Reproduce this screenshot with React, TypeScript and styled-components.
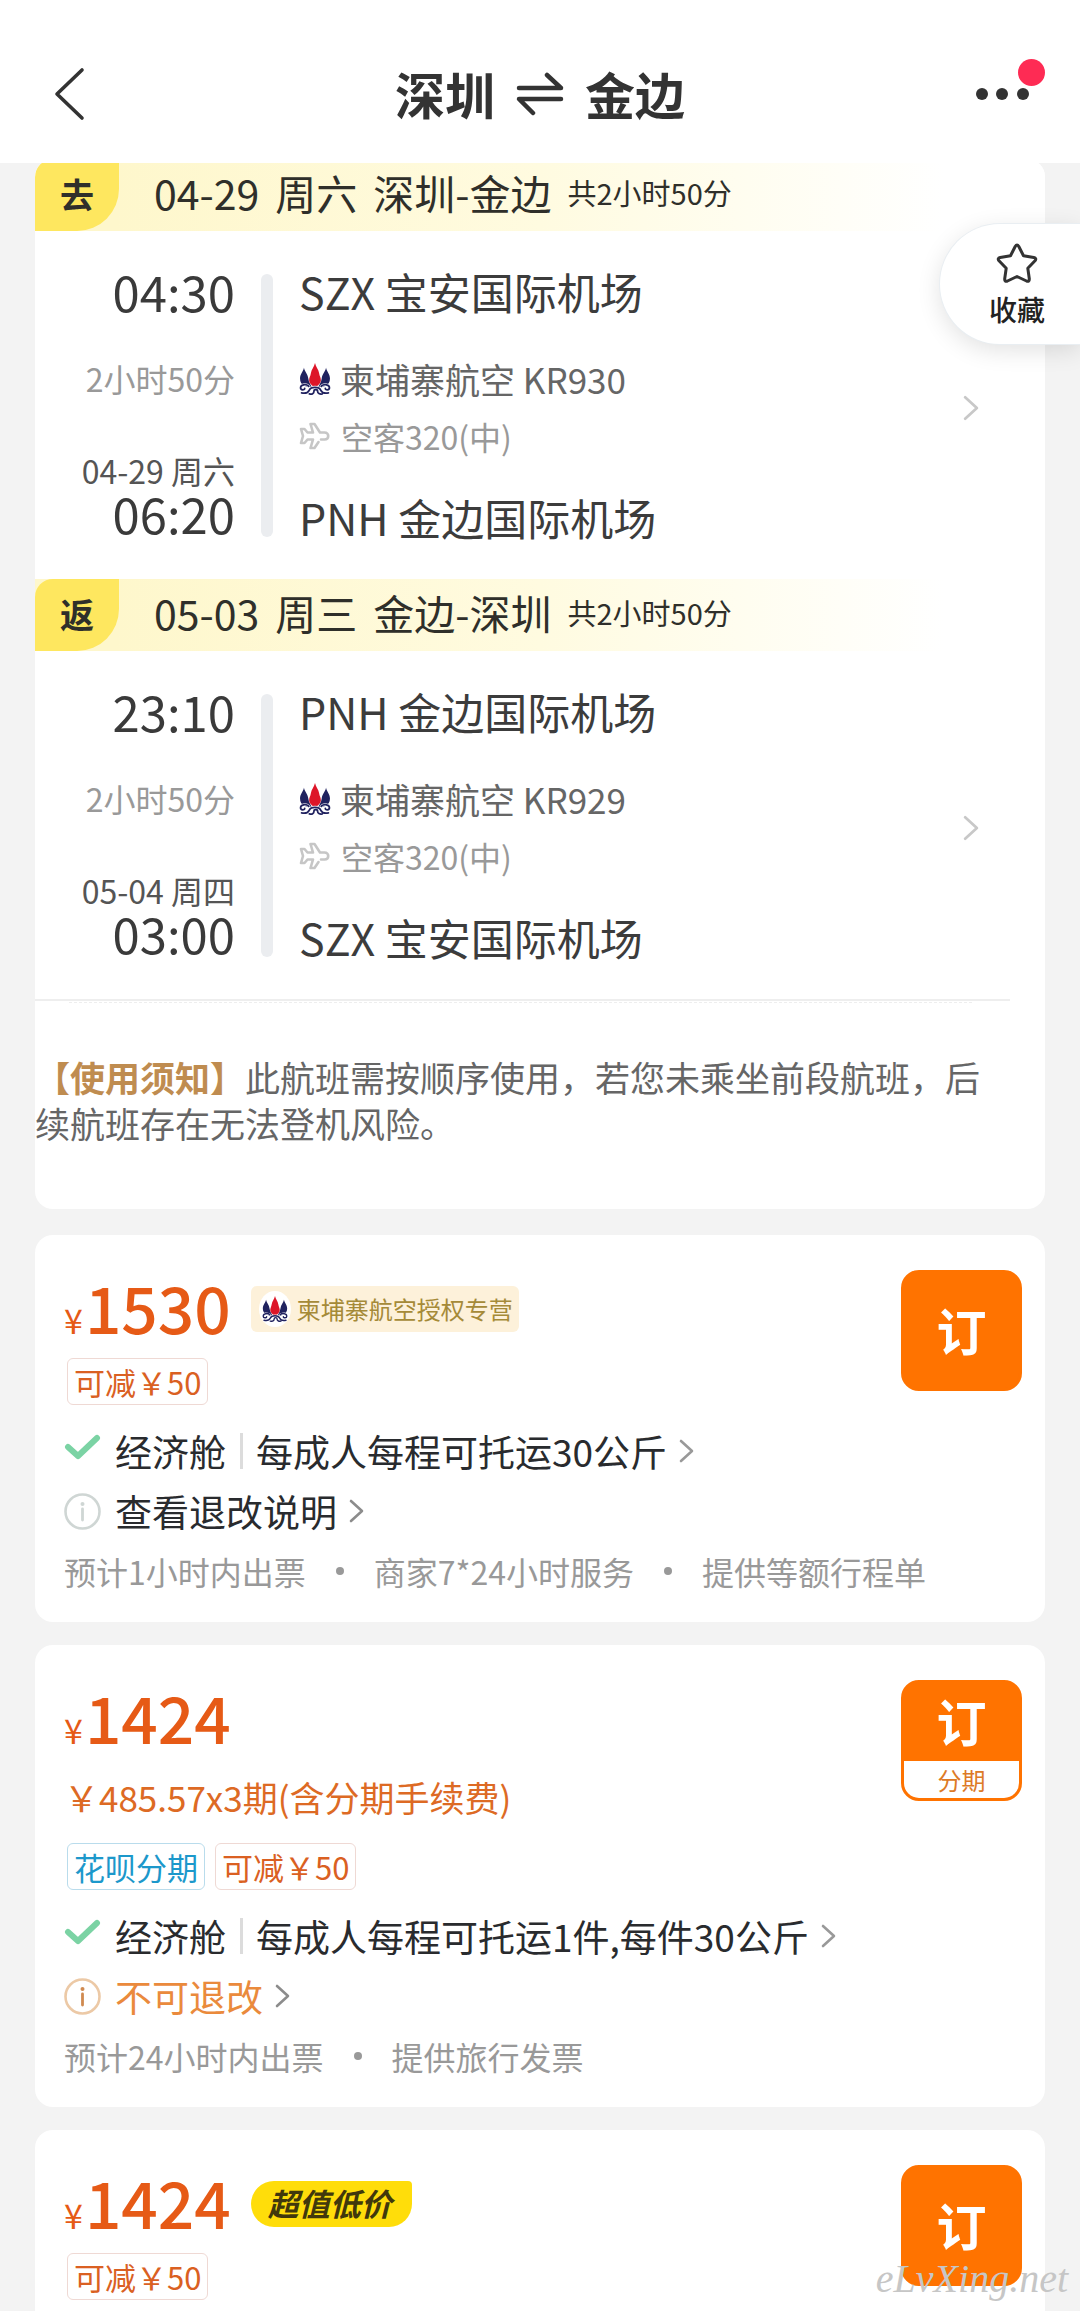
import React from 'react';
import styled, { createGlobalStyle, css } from 'styled-components';

const sans = '"Noto Sans CJK SC", "Noto Sans", sans-serif';

const Global = createGlobalStyle`
  *, *::before, *::after { box-sizing: border-box; }
  body { margin: 0; background: #f3f3f3; font-family: ${sans}; color: #333; }
  h1, p { margin: 0; }
  button { border: 0; padding: 0; background: none; font: inherit; color: inherit; cursor: pointer; }
  svg { display: block; flex: none; }
`;

const Page = styled.div`
  position: relative;
  height: 100vh;
  overflow: hidden;
`;

const Header = styled.header`
  position: relative;
  z-index: 2;
  display: grid;
  grid-template-columns: 1fr auto 1fr;
  align-items: center;
  padding: 56px 32px 32px;
  background: #fff;
`;

const BackButton = styled.button`
  display: flex;
  align-items: center;
  justify-self: start;
  height: 75px;
  padding-left: 16px;
`;

const MoreButton = styled.button`
  position: relative;
  display: flex;
  align-items: center;
  justify-self: end;
  height: 75px;
`;

const UnreadDot = styled.span`
  position: absolute;
  top: 3px;
  right: 3px;
  width: 27px;
  height: 27px;
  border-radius: 50%;
  background: #fe2b54;
`;

const Title = styled.h1`
  display: flex;
  align-items: center;
  gap: 21px;
  font-size: 50px;
  line-height: 75px;
  font-weight: 700;
`;

const Main = styled.main`
  display: flex;
  flex-direction: column;
  gap: 23px;
  padding: 0 35px;
  margin-top: -4px;
`;

const Card = styled.section`
  background: #fff;
  border-radius: 18px;
`;

const ItineraryCard = styled(Card)`
  overflow: hidden;
  margin-bottom: 3px;
`;

const LegBanner = styled.div`
  display: flex;
  align-items: stretch;
  height: 72px;
  background: linear-gradient(90deg, #fef7cc 8%, #fffbe0 50%, #fff 90%);
  color: #2f2f2a;
`;

const LegTag = styled.span`
  width: 84px;
  border-radius: 18px 0 42px 0;
  background: #fee75f;
  font-size: 34px;
  line-height: 70px;
  font-weight: 700;
  text-align: center;
`;

const LegHeading = styled.div`
  display: flex;
  align-items: center;
  gap: 16px;
  padding: 0 0 6px 35px;
  font-size: 41px;
  line-height: 60px;
`;

const LegTotal = styled.span`
  font-size: 29px;
`;

const LegBody = styled.div`
  display: grid;
  grid-template-columns: 200px 12px 1fr auto;
  column-gap: 26px;
  align-items: stretch;
  padding: 40px 66px 42px 0;
  line-height: 40px;
`;

const Times = styled.div`
  display: flex;
  flex-direction: column;
  align-items: flex-end;
`;

const Clock = styled.time`
  font-size: 49px;
  color: #3a3a3a;
`;

const Duration = styled.span`
  margin: 47px 0 52px;
  font-size: 32px;
  color: #999;
`;

const ArrivalDate = styled.span`
  margin-bottom: 3px;
  font-size: 32px;
  color: #555;
`;

const Rail = styled.span`
  margin-top: 3px;
  border-radius: 6px;
  background: #ebedf0;
`;

const Stops = styled.div`
  display: flex;
  flex-direction: column;
`;

const Airport = styled.span`
  font-size: 43px;
  color: #3c3c3c;
`;

const Carrier = styled.span`
  display: flex;
  align-items: center;
  gap: 9px;
  margin: 48px 0 17px;
  font-size: 35px;
  color: #666;
`;

const Aircraft = styled.span`
  display: flex;
  align-items: center;
  gap: 10px;
  margin-bottom: 41px;
  font-size: 32px;
  color: #999;
`;

const LegLink = styled.a`
  display: flex;
  align-items: center;
  padding-top: 8px;
`;

const Notice = styled.div`
  margin-right: 35px;
  padding-bottom: 63px;
  border-top: 2px solid #eee;

  &::before {
    content: '';
    display: block;
    margin: 1px 38px 51px 34px;
    border-top: 1px dashed #eee;
  }
`;

const NoticeText = styled.p`
  font-size: 35px;
  line-height: 46px;
  color: #666;

  strong { color: #bf8c50; }
`;

const OfferCard = styled(Card)`
  display: flex;
  align-items: flex-start;
  justify-content: space-between;
  padding: 35px 23px 29px 29px;
`;

const OfferBody = styled.div`
  display: flex;
  flex-direction: column;
  min-width: 0;
`;

const PriceRow = styled.div`
  display: flex;
  align-items: center;
  gap: 20px;
  height: 78px;
  margin-bottom: 2px;
`;

const Price = styled.span`
  padding-top: 8px;
  font-size: 64px;
  line-height: 78px;
  font-weight: 500;
  color: #e65a16;

  small { margin-right: 2px; font-size: 34px; font-weight: 400; }
`;

const AgentBadge = styled.span`
  display: flex;
  align-items: center;
  gap: 6px;
  height: 46px;
  padding: 0 6px 0 8px;
  border-radius: 6px;
  background: #fdf1da;
  font-size: 24px;
  line-height: 42px;
  color: #a58a38;
`;

const LogoDisc = styled.span`
  display: flex;
  align-items: center;
  justify-content: center;
  width: 32px;
  height: 36px;
  border-radius: 50%;
  background: #fff;
`;

const DealBadge = styled.span`
  height: 46px;
  padding: 0 20px 0 17px;
  border-radius: 23px 4px 23px 23px;
  background: #ffdd0a;
  font-size: 31px;
  line-height: 44px;
  font-weight: 700;
  font-style: italic;
  color: #41380c;
`;

const Installment = styled.p`
  margin: 17px 0 2px;
  font-size: 35px;
  line-height: 40px;
  color: #dd6a24;
`;

const Tags = styled.div<{ $tight?: boolean }>`
  display: flex;
  gap: 10px;
  margin: ${p => (p.$tight ? '8px' : '24px')} 0 0 3px;
`;

const Tag = styled.span<{ $tone: 'blue' | 'orange' }>`
  padding: 0 6px;
  border: 1px solid;
  border-radius: 6px;
  font-size: 31px;
  line-height: 45px;
  ${p =>
    p.$tone === 'blue'
      ? css`color: #1c98cb; border-color: #b9dcec;`
      : css`color: #da6022; border-color: #efd9d4;`}
`;

const Rule = styled.button<{ $warn?: boolean; $first?: boolean }>`
  display: flex;
  align-items: center;
  align-self: flex-start;
  height: 48px;
  margin-top: ${p => (p.$first ? '22px' : '12px')};
  font-size: 37px;
  line-height: 48px;
  white-space: nowrap;
  color: ${p => (p.$warn ? '#ea8a3c' : '#292b2e')};
`;

const RuleIcon = styled.span`
  width: 51px;
`;

const Divider = styled.span`
  width: 3px;
  height: 36px;
  margin: 0 13px 0 14px;
  background: #dcdcdc;
`;

const RuleArrow = styled.span`
  padding-left: 12px;
`;

const Perks = styled.ul`
  display: flex;
  align-items: center;
  gap: 30px;
  margin: 16px 0 2px;
  padding: 0;
  list-style: none;
  font-size: 32px;
  line-height: 40px;
  white-space: nowrap;
  color: #999;

  li { display: flex; align-items: center; gap: 30px; }
  li + li::before {
    content: '';
    width: 8px;
    height: 8px;
    border-radius: 50%;
    background: #999;
  }
`;

const BookButton = styled.button`
  display: flex;
  flex: none;
  flex-direction: column;
  width: 121px;
  height: 121px;
  margin-left: -121px;
  border: 3px solid #ff7300;
  border-radius: 18px;
  overflow: hidden;
  background: #ff7300;
`;

const BookLabel = styled.span`
  display: flex;
  flex: 1;
  align-items: center;
  justify-content: center;
  width: 100%;
  padding-bottom: 4px;
  font-size: 50px;
  line-height: 50px;
  font-weight: 700;
  color: #fff;
`;

const BookNote = styled.span`
  width: 100%;
  background: #fff;
  font-size: 24px;
  line-height: 37px;
  text-align: center;
  color: #dd7a26;
`;

const Favorite = styled.button`
  position: absolute;
  z-index: 3;
  top: 224px;
  right: 0;
  display: flex;
  flex-direction: column;
  align-items: center;
  gap: 3px;
  width: 140px;
  height: 120px;
  padding: 18px 0 0 14px;
  border-radius: 60px 0 0 60px;
  background: #fff;
  box-shadow: 0 0 0 1px #e9eef2, 0 6px 24px rgba(0, 0, 0, 0.12);
  font-size: 28px;
  line-height: 36px;
  font-weight: 500;
  color: #222;
`;

const Watermark = styled.span`
  position: absolute;
  z-index: 3;
  right: 12px;
  bottom: 8px;
  font-family: "Liberation Serif", serif;
  font-size: 40px;
  line-height: 48px;
  font-style: italic;
  color: #c6c6c6;
`;

function Chevron({ width = 15, height = 24, color = '#999' }) {
  return (
    <svg width={width} height={height} viewBox="0 0 15 24" fill="none" stroke={color} strokeWidth="2.6" strokeLinecap="round" strokeLinejoin="round">
      <path d="M2 2l11 10L2 22" />
    </svg>
  );
}

const waves =
  'M9.500 22.500C6.500 19.800 1.500 21 1.500 24c0 2.500 4 2.600 4 .6M10 30c2.500.6 4.500-.5 4.500-2.700 0-2 3.500-2 3.500 0 0 2 2 3.200 4.500 2.700M21.500 22.500c3-2.700 8-1.500 8 1.500 0 2.500-4 2.600-4 .6M2.500 29c4 .8 6.500-.5 7.500-2.800 1.500-3.600 9.500-3.600 11 0 1 2.300 3.500 3.600 7.500 2.800';

function AirlineLogo({ size = 32 }) {
  return (
    <svg width={size} height={size} viewBox="0 0 31 31" fill="none">
      <path d="M4.800 4.500C4 8.500 1 10.500 1 15c0 3.500 1.500 5.500 4 7l9 3C11.500 22 9.500 19 9 15 8.600 10.500 5.600 8.500 4.800 4.500zM26.200 4.500c-.8 4-3.800 6-4.200 10.500-.5 4-2.500 7-5 10l9-3c2.500-1.500 4-3.500 4-7 0-4.500-3-6.500-3.800-10.500z" fill="#20225f" />
      <path d="M15.500 0c-.8 4-3.500 6-4 10-.3 3-1.800 4-1.700 7 .2 3 3 5 5.700 7 2.700-2 5.500-4 5.700-7 .1-3-1.400-4-1.700-7-.5-4-3.200-6-4-10z" fill="#dd1528" />
      <path d={waves} stroke="#fff" strokeWidth="2.800" strokeLinecap="round" />
      <path d={waves} stroke="#20225f" strokeWidth="1.700" strokeLinecap="round" />
    </svg>
  );
}

function PlaneIcon() {
  return (
    <svg width="32" height="28" viewBox="0 0 32 28" fill="none" stroke="#c6c6c6" strokeWidth="2.600" strokeLinejoin="round" strokeLinecap="round">
      <path d="M22 17.500h3.500c5 0 5-7 0-7H21L15.500 2h-4l2.500 8.500H8.500L5.500 7H2l2 7-2 7h3.500l3-3.500H14L11.500 26h4l4-6" />
    </svg>
  );
}

function CheckIcon() {
  return (
    <svg width="37" height="36" viewBox="0 0 37 36" fill="none" stroke="#7bd3a4" strokeWidth="6" strokeLinecap="round" strokeLinejoin="round">
      <path d="M4 14l10 9L33 5" />
    </svg>
  );
}

function InfoIcon({ warn = false }) {
  return (
    <svg width="37" height="37" viewBox="0 0 37 37" fill="none">
      <circle cx="18.500" cy="18.500" r="17" stroke={warn ? '#ecc9a6' : '#cfd6d4'} strokeWidth="2.600" />
      <circle cx="18.500" cy="11" r="2" fill={warn ? '#d08a50' : '#cfd6d4'} />
      <path d="M18.500 16v11" stroke={warn ? '#d08a50' : '#cfd6d4'} strokeWidth="2.800" strokeLinecap="round" />
    </svg>
  );
}

type LegData = {
  tag: string; date: string; day: string; route: string;
  from: string; to: string; depart: string; arrive: string; arriveDate: string; flight: string;
};

const legs: LegData[] = [
  { tag: '去', date: '04-29', day: '周六', route: '深圳-金边', from: 'SZX 宝安国际机场', to: 'PNH 金边国际机场', depart: '04:30', arrive: '06:20', arriveDate: '04-29 周六', flight: '柬埔寨航空 KR930' },
  { tag: '返', date: '05-03', day: '周三', route: '金边-深圳', from: 'PNH 金边国际机场', to: 'SZX 宝安国际机场', depart: '23:10', arrive: '03:00', arriveDate: '05-04 周四', flight: '柬埔寨航空 KR929' },
];

function Leg({ leg }: { leg: LegData }) {
  return (
    <div>
      <LegBanner>
        <LegTag>{leg.tag}</LegTag>
        <LegHeading>
          <span>{leg.date}</span>
          <span>{leg.day}</span>
          <span>{leg.route}</span>
          <LegTotal>共2小时50分</LegTotal>
        </LegHeading>
      </LegBanner>
      <LegBody>
        <Times>
          <Clock>{leg.depart}</Clock>
          <Duration>2小时50分</Duration>
          <ArrivalDate>{leg.arriveDate}</ArrivalDate>
          <Clock>{leg.arrive}</Clock>
        </Times>
        <Rail />
        <Stops>
          <Airport>{leg.from}</Airport>
          <Carrier><AirlineLogo />{leg.flight}</Carrier>
          <Aircraft><PlaneIcon />空客320(中)</Aircraft>
          <Airport>{leg.to}</Airport>
        </Stops>
        <LegLink href="#flight" aria-label={leg.flight}>
          <Chevron width={16} height={28} color="#c8c8c8" />
        </LegLink>
      </LegBody>
    </div>
  );
}

type OfferProps = {
  price: string;
  badge?: React.ReactNode;
  installment?: string;
  baggage: string;
  refund: string;
  refundWarn?: boolean;
  perks: string[];
};

function Offer({ price, badge, installment, baggage, refund, refundWarn, perks }: OfferProps) {
  return (
    <OfferCard>
      <OfferBody>
        <PriceRow>
          <Price><small>¥</small>{price}</Price>
          {badge}
        </PriceRow>
        {installment && <Installment>{installment}</Installment>}
        <Tags $tight={!installment}>
          {installment && <Tag $tone="blue">花呗分期</Tag>}
          <Tag $tone="orange">可减￥50</Tag>
        </Tags>
        <Rule $first>
          <RuleIcon><CheckIcon /></RuleIcon>
          经济舱<Divider />{baggage}
          <RuleArrow><Chevron /></RuleArrow>
        </Rule>
        <Rule $warn={refundWarn}>
          <RuleIcon><InfoIcon warn={refundWarn} /></RuleIcon>
          {refund}
          <RuleArrow><Chevron color="#8c8c8c" /></RuleArrow>
        </Rule>
        <Perks>{perks.map(p => <li key={p}>{p}</li>)}</Perks>
      </OfferBody>
      <BookButton>
        <BookLabel>订</BookLabel>
        {installment && <BookNote>分期</BookNote>}
      </BookButton>
    </OfferCard>
  );
}

export default function App() {
  return (
    <Page>
      <Global />
      <Header>
        <BackButton aria-label="返回">
          <svg width="44" height="56" viewBox="0 0 44 56" fill="none" stroke="#333" strokeWidth="3.600" strokeLinecap="round" strokeLinejoin="round">
            <path d="M34 4 9 28l25 24" />
          </svg>
        </BackButton>
        <Title>
          深圳
          <svg width="48" height="44" viewBox="0 0 48 44" fill="none" stroke="#333" strokeWidth="4.500" strokeLinecap="round" strokeLinejoin="round">
            <path d="M3 16h42L31 3M45 27H3l14 14" />
          </svg>
          金边
        </Title>
        <MoreButton aria-label="更多">
          <svg width="74" height="16" viewBox="0 0 74 16" fill="#333">
            <circle cx="8" cy="8" r="6" />
            <circle cx="28" cy="8" r="6" />
            <circle cx="49" cy="8" r="6" />
          </svg>
          <UnreadDot />
        </MoreButton>
      </Header>
      <Main>
        <ItineraryCard>
          {legs.map(leg => <Leg key={leg.tag} leg={leg} />)}
          <Notice>
            <NoticeText>
              <strong>【使用须知】</strong>此航班需按顺序使用，若您未乘坐前段航班，后续航班存在无法登机风险。
            </NoticeText>
          </Notice>
        </ItineraryCard>
        <Offer
          price="1530"
          badge={<AgentBadge><LogoDisc><AirlineLogo size={26} /></LogoDisc>柬埔寨航空授权专营</AgentBadge>}
          baggage="每成人每程可托运30公斤"
          refund="查看退改说明"
          perks={['预计1小时内出票', '商家7*24小时服务', '提供等额行程单']}
        />
        <Offer
          price="1424"
          installment="￥485.57x3期(含分期手续费)"
          baggage="每成人每程可托运1件,每件30公斤"
          refund="不可退改"
          refundWarn
          perks={['预计24小时内出票', '提供旅行发票']}
        />
        <OfferCard>
          <OfferBody>
            <PriceRow>
              <Price><small>¥</small>1424</Price>
              <DealBadge>超值低价</DealBadge>
            </PriceRow>
            <Tags $tight><Tag $tone="orange">可减￥50</Tag></Tags>
          </OfferBody>
          <BookButton><BookLabel>订</BookLabel></BookButton>
        </OfferCard>
      </Main>
      <Favorite>
        <svg width="46" height="46" viewBox="0 0 46 46" fill="none" stroke="#333" strokeWidth="3" strokeLinejoin="round">
          <path d="M21.200 4.500q1.800-3 3.600 0l4.700 9.300 10.300 1.700q3.200.8 1.200 3.300l-7.200 7.500 1.500 10.500q.2 3.200-2.800 2.200L23 34.500 13.500 39q-3 1-2.800-2.200l1.500-10.500L5 18.800q-2-2.500 1.200-3.300l10.300-1.700z" />
        </svg>
        收藏
      </Favorite>
      <Watermark>eLvXing.net</Watermark>
    </Page>
  );
}
